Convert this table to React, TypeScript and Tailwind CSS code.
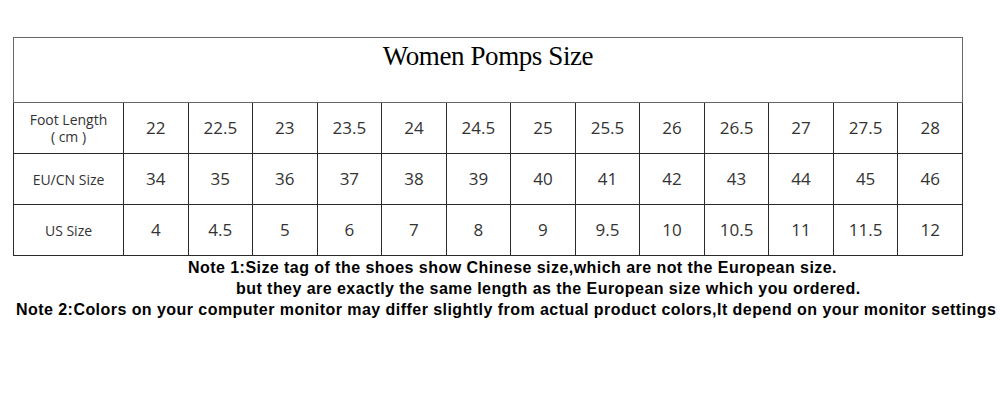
import React from "react";

const foot = ["22", "22.5", "23", "23.5", "24", "24.5", "25", "25.5", "26", "26.5", "27", "27.5", "28"];
const eu = ["34", "35", "36", "37", "38", "39", "40", "41", "42", "43", "44", "45", "46"];
const us = ["4", "4.5", "5", "6", "7", "8", "9", "9.5", "10", "10.5", "11", "11.5", "12"];

const cell = "border border-[#2a2a2a] text-center align-middle p-0";

export default function App() {
  return (
    <div className="w-[1000px] h-[400px] bg-white overflow-hidden">
      <div className="pt-[37px] pl-[13px]">
        <table
          className="table-fixed border-collapse w-[950px] text-[#333]"
          style={{ fontFamily: '"Open Sans", sans-serif' }}
        >
          <colgroup>
            <col className="w-[110px]" />
            {foot.map((_, i) => (
              <col key={i} />
            ))}
          </colgroup>
          <tbody>
            <tr className="h-[65px]">
              <td colSpan={14} className="border border-[#666] align-top text-center pt-[2px]">
                <span
                  className="text-[27px] leading-[32px] text-black tracking-[-0.4px]"
                  style={{ fontFamily: '"Liberation Serif", serif' }}
                >
                  Women Pomps Size
                </span>
              </td>
            </tr>
            <tr className="h-[51px]">
              <td className={`${cell} text-[14px] leading-[17px]`}>
                Foot Length
                <br />( cm )
              </td>
              {foot.map((v) => (
                <td key={v} className={`${cell} text-[17px]`}>
                  {v}
                </td>
              ))}
            </tr>
            <tr className="h-[51px]">
              <td className={`${cell} text-[14px]`}>EU/CN Size</td>
              {eu.map((v) => (
                <td key={v} className={`${cell} text-[17px]`}>
                  {v}
                </td>
              ))}
            </tr>
            <tr className="h-[51px]">
              <td className={`${cell} text-[14px]`}>US Size</td>
              {us.map((v) => (
                <td key={v} className={`${cell} text-[17px]`}>
                  {v}
                </td>
              ))}
            </tr>
          </tbody>
        </table>
      </div>
      <div
        className="flex flex-col font-bold text-[16px] leading-[21px] tracking-[0.45px] text-black pt-[1px]"
        style={{ fontFamily: '"Liberation Sans", Arial, sans-serif' }}
      >
        <div className="pl-[188px] whitespace-nowrap">
          Note 1:Size tag of the shoes show Chinese size,which are not the European size.
        </div>
        <div className="pl-[236px] whitespace-nowrap">
          but they are exactly the same length as the European size which you ordered.
        </div>
        <div className="pl-[16px] whitespace-nowrap">
          Note 2:Colors on your computer monitor may differ slightly from actual product colors,It depend on your monitor settings
        </div>
      </div>
    </div>
  );
}
